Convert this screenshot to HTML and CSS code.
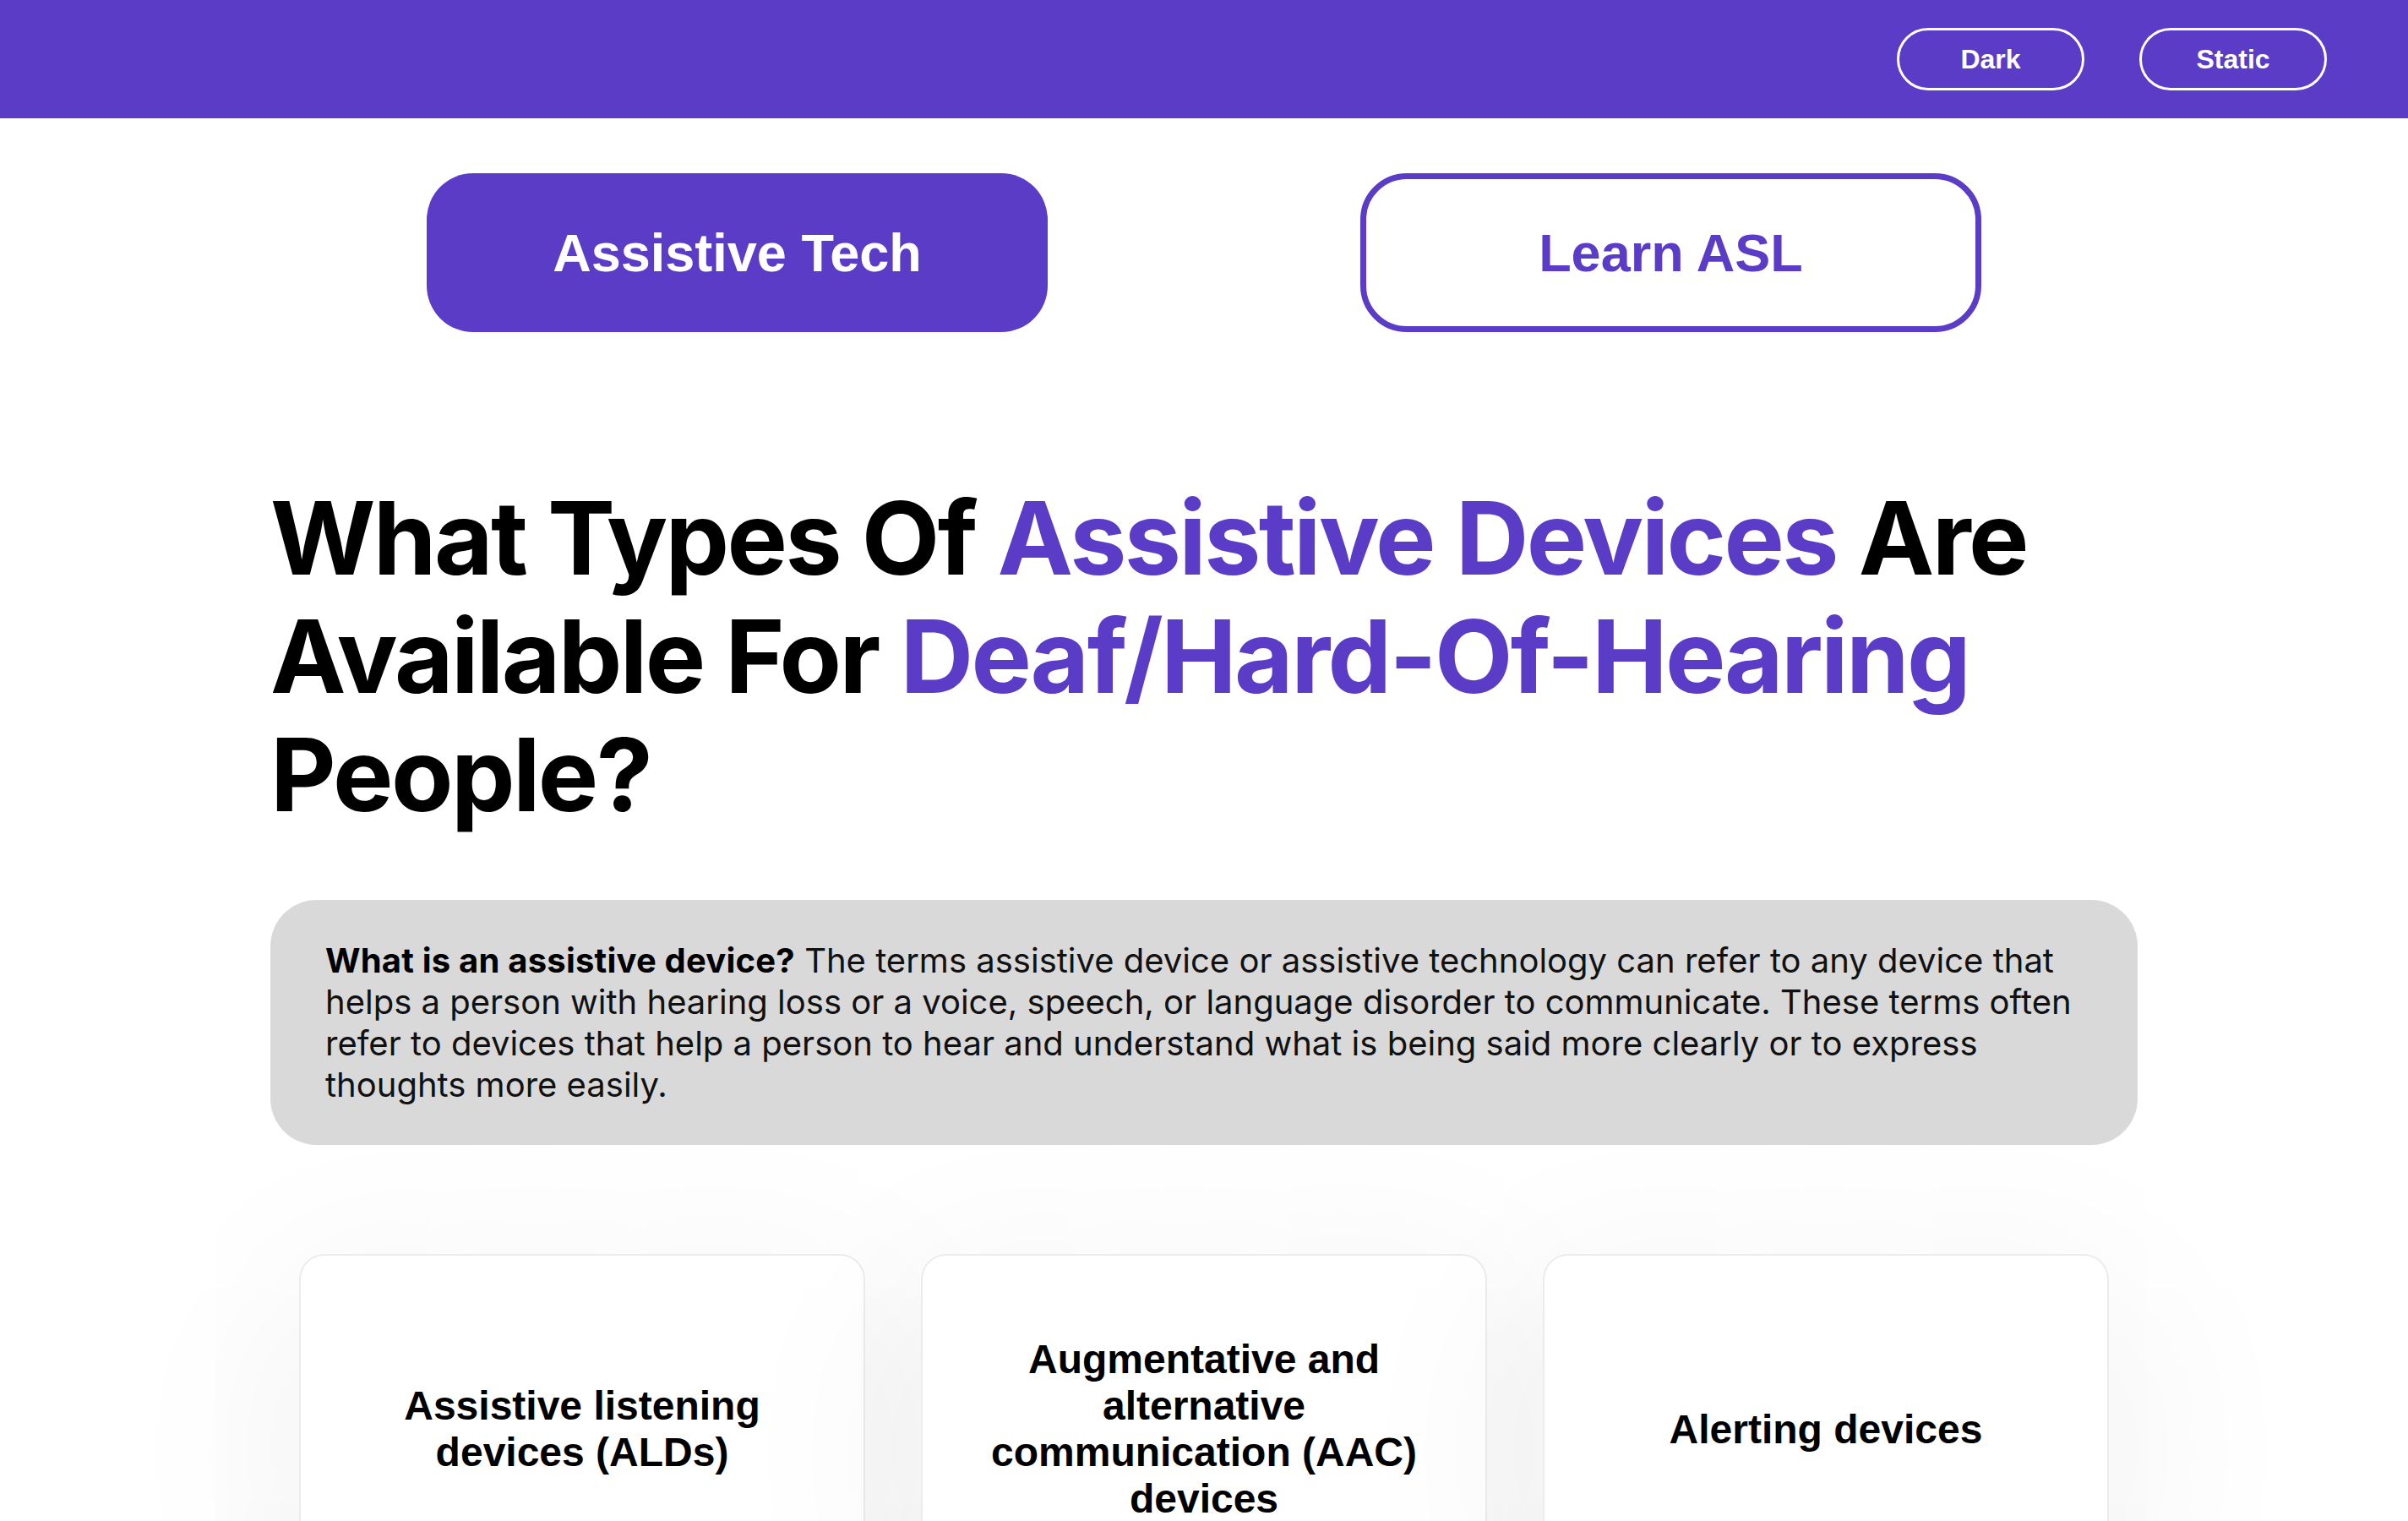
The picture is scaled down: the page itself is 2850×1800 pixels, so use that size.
FILE: index.html
```html
<!DOCTYPE html>
<html lang="en">
<head>
<meta charset="utf-8">
<title>Assistive Devices</title>
<link rel="stylesheet" href="styles.css">
</head>
<body>
<header class="topbar">
  <div class="toggles">
    <button class="toggle">Dark</button>
    <button class="toggle">Static</button>
  </div>
</header>
<nav class="tabs">
  <a class="tab tab-active" href="#">Assistive Tech</a>
  <a class="tab tab-outline" href="#">Learn ASL</a>
</nav>
<main class="content">
  <h1 class="title">What Types Of <span class="accent">Assistive Devices</span> Are Available For <span class="accent">Deaf/Hard-Of-Hearing</span> People?</h1>
  <p class="callout"><strong>What is an assistive device?</strong> The terms assistive device or assistive technology can refer to any device that helps a person with hearing loss or a voice, speech, or language disorder to communicate. These terms often refer to devices that help a person to hear and understand what is being said more clearly or to express thoughts more easily.</p>
  <section class="cards">
    <div class="card"><h2 class="card-title">Assistive listening devices (ALDs)</h2></div>
    <div class="card"><h2 class="card-title">Augmentative and alternative communication (AAC) devices</h2></div>
    <div class="card"><h2 class="card-title">Alerting devices</h2></div>
  </section>
</main>
</body>
</html>
```
FILE: styles.css
```css
* { box-sizing: border-box; }
html, body { margin: 0; padding: 0; background: #ffffff; }
body { font-family: Inter, "Noto Sans", sans-serif; color: #000; }

.topbar {
  height: 140px;
  background: #5b3cc6;
  display: flex;
  justify-content: flex-end;
  align-items: center;
  padding-right: 96px;
}
.toggles { display: flex; gap: 65px; }
.toggle {
  width: 222px;
  height: 74px;
  border: 3px solid #ffffff;
  border-radius: 37px;
  background: transparent;
  color: #ffffff;
  font-family: "Liberation Sans", Arial, sans-serif;
  font-weight: 700;
  font-size: 32px;
  padding: 0;
}

.tabs {
  display: flex;
  justify-content: center;
  gap: 370px;
  margin-top: 65px;
}
.tab {
  width: 735px;
  height: 188px;
  border-radius: 55px;
  display: flex;
  align-items: center;
  justify-content: center;
  font-family: "Liberation Sans", Arial, sans-serif;
  font-size: 63px;
  font-weight: 700;
  text-decoration: none;
}
.tab-active { background: #5b3cc6; color: #ffffff; }
.tab-outline { border: 7px solid #5b3cc6; color: #5b3cc6; background: #fff; }

.content {
  width: 2210px;
  margin: 0 auto;
}
.title {
  margin: 174px 0 0;
  font-size: 120px;
  line-height: 140px;
  font-weight: 700;
  letter-spacing: -0.022em;
}
.accent { color: #5b3cc6; }

.callout {
  margin: 78px 0 0;
  background: #d9d9d9;
  border-radius: 55px;
  padding: 47px 65px;
  font-size: 40px;
  line-height: 49px;
  color: #111;
}
.callout strong { font-weight: 700; color: #000; letter-spacing: 0.2px; }

.cards {
  margin-top: 129px;
  display: flex;
  justify-content: center;
  gap: 66px;
}
.card {
  width: 670px;
  height: 414px;
  border: 2px solid #ececec;
  border-radius: 30px;
  background: #fff;
  box-shadow: 0 60px 220px 30px rgba(0, 0, 0, 0.06);
  display: flex;
  align-items: center;
  justify-content: center;
  padding: 0 60px;
}
.card-title {
  margin: 0;
  text-align: center;
  font-family: "Liberation Sans", Arial, sans-serif;
  font-size: 48px;
  line-height: 55px;
  font-weight: 700;
}
```
